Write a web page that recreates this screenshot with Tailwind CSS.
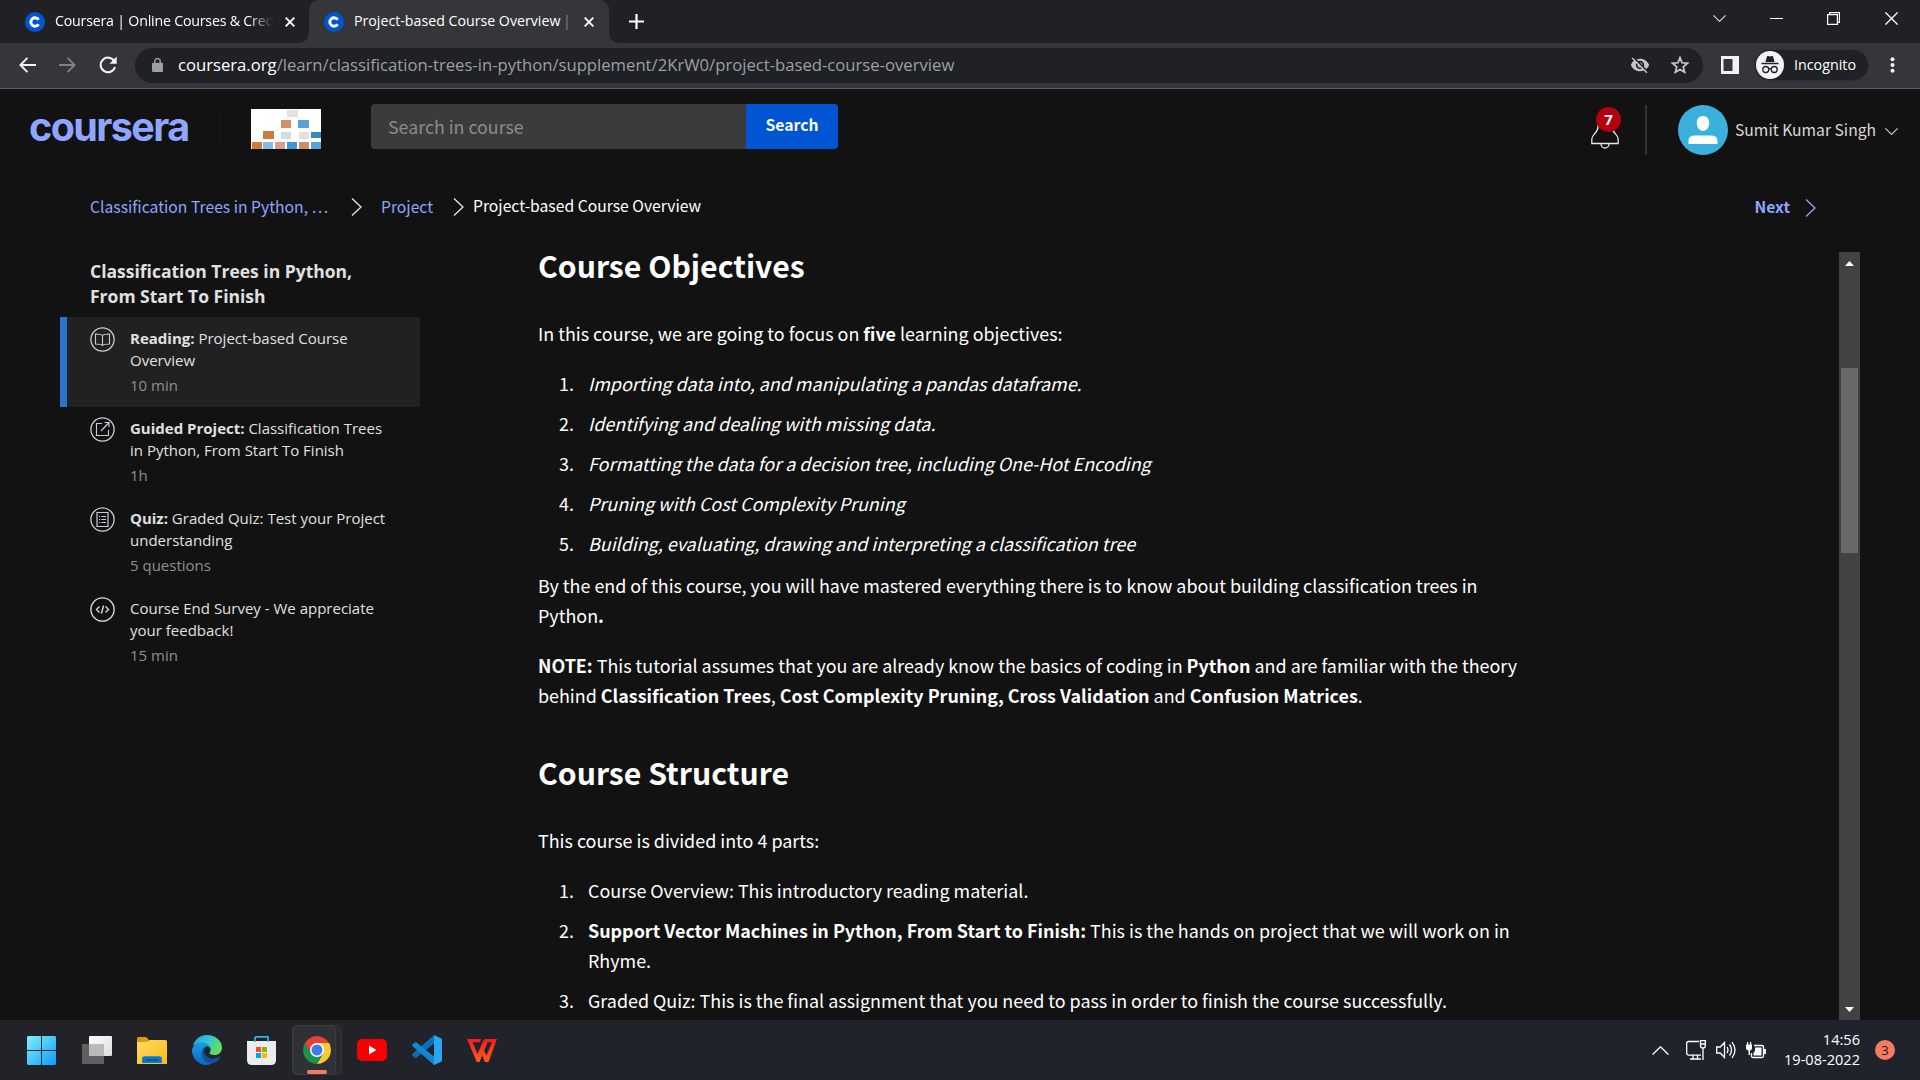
<!DOCTYPE html>
<html lang="en">
<head>
<meta charset="utf-8">
<title>Project-based Course Overview | Coursera</title>
<script src="https://cdn.jsdelivr.net/npm/@tailwindcss/browser@4"></script>
</head>
<body class="w-[1920px] h-[1080px] overflow-hidden bg-[#121212] text-white flex flex-col font-['Noto_Sans_CJK_SC',sans-serif]">

<!-- Tab strip -->
<div class="h-[43px] shrink-0 bg-[#202124] flex font-['Open_Sans',sans-serif] text-[14.2px]">
  <div class="w-[309px] flex items-center pl-[25px] pr-[13px]">
    <svg class="w-5 h-5 shrink-0" viewBox="0 0 20 20"><circle cx="10" cy="10" r="10" fill="#0056d2"/><path d="M13.6 7.8A4.2 4.2 0 1 0 13.6 12.2" fill="none" stroke="#fff" stroke-width="2.9"/></svg>
    <span class="ml-[10px] mb-[2px] w-[218px] whitespace-nowrap leading-5 tracking-[-0.2px] [mask-image:linear-gradient(to_right,#000_89%,transparent)]">Coursera | Online Courses &amp; Cred</span>
    <svg class="ml-3 w-[10px] h-[10px] shrink-0" viewBox="0 0 10 10"><path d="M.7.7l8.6 8.6M9.3.7L.7 9.3" stroke="#fff" stroke-width="1.9"/></svg>
  </div>
  <div class="relative w-[300px] bg-[#35363a] rounded-t-[10px] flex items-center pl-[15px]">
    <svg class="absolute -left-[10px] bottom-0 w-[10px] h-[10px]" viewBox="0 0 10 10"><path d="M10 0v10H0A10 10 0 0 0 10 0z" fill="#35363a"/></svg>
    <svg class="absolute -right-[10px] bottom-0 w-[10px] h-[10px]" viewBox="0 0 10 10"><path d="M0 0v10h10A10 10 0 0 1 0 0z" fill="#35363a"/></svg>
    <svg class="w-5 h-5 shrink-0" viewBox="0 0 20 20"><circle cx="10" cy="10" r="10" fill="#0056d2"/><path d="M13.6 7.8A4.2 4.2 0 1 0 13.6 12.2" fill="none" stroke="#fff" stroke-width="2.9"/></svg>
    <span class="ml-[10px] mb-[2px] w-[219px] whitespace-nowrap leading-5">Project-based Course Overview <span class="-ml-px text-[#7d8790]">|</span></span>
    <svg class="ml-[11px] w-[10px] h-[10px] shrink-0" viewBox="0 0 10 10"><path d="M.7.7l8.6 8.6M9.3.7L.7 9.3" stroke="#fff" stroke-width="1.9"/></svg>
  </div>
  <div class="flex items-center pl-5"><svg class="w-[15px] h-[15px]" viewBox="0 0 15 15"><path d="M7.5 0v15M0 7.5h15" stroke="#fff" stroke-width="2.2"/></svg></div>
  <div class="ml-auto mr-[22px] h-[37px] flex items-center">
    <svg class="w-[13px] h-[7px] mr-[44px]" viewBox="0 0 13 7"><path d="M.4.4l6.1 6 6.1-6" fill="none" stroke="#ddd" stroke-width="1.1"/></svg>
    <svg class="w-[13px] h-[13px] mr-[44px]" viewBox="0 0 13 13"><path d="M0 6.5h13" stroke="#fff"/></svg>
    <svg class="w-[13px] h-[13px] mr-[45px]" viewBox="0 0 13 13"><path d="M.6 2.6h9.8v9.8H.6zM2.6 2.6V.6h9.8v9.8h-2" fill="none" stroke="#fff" stroke-width="1.2"/></svg>
    <svg class="w-[13px] h-[13px]" viewBox="0 0 13 13"><path d="M.4.4l12.2 12.2M12.6.4L.4 12.6" stroke="#fff" stroke-width="1.3"/></svg>
  </div>
</div>

<!-- Toolbar -->
<div class="h-[46px] shrink-0 bg-[#35363a] border-b border-[#5c5d60] flex items-center pb-px font-['Open_Sans',sans-serif]">
  <svg class="ml-[19px] w-[17px] h-4" viewBox="0 0 17 16"><path d="M17 8H1.6M8.4.8L1.4 8l7 7.2" fill="none" stroke="#f1f3f4" stroke-width="1.9"/></svg>
  <svg class="ml-[23px] w-[17px] h-4" viewBox="0 0 17 16"><path d="M0 8h15.4M8.6.8l7 7.2-7 7.2" fill="none" stroke="#7f8185" stroke-width="1.9"/></svg>
  <svg class="ml-[23px] w-[18px] h-[18px]" viewBox="0 0 18 18"><path d="M15.3 5.2A7.3 7.3 0 1 0 16 11" fill="none" stroke="#f1f3f4" stroke-width="2"/><path d="M17.7.6v7.2h-7.2z" fill="#f1f3f4"/></svg>
  <div class="ml-[18px] w-[1568px] h-[35px] rounded-full bg-[#202124] flex items-center pl-[17px] pr-[12px]">
    <svg class="w-[11px] h-[14px]" viewBox="0 0 11 14"><rect y="4.7" width="11" height="9.3" rx="1.2" fill="#9aa0a6"/><path d="M2.7 5V3.4a2.8 2.8 0 0 1 5.6 0V5" fill="none" stroke="#9aa0a6" stroke-width="1.4"/></svg>
    <span class="ml-[15px] text-[16.67px] leading-6 text-[#9aa0a6] whitespace-nowrap"><span class="text-white">coursera.org</span>/learn/classification-trees-in-python/supplement/2KrW0/project-based-course-overview</span>
    <svg class="ml-auto w-5 h-5" viewBox="0 0 24 24" fill="#c4c7c9"><path d="M12 7c2.8 0 5 2.200 5 5 0 .650-.130 1.260-.360 1.830l2.920 2.920c1.510-1.260 2.700-2.890 3.430-4.750C21.270 7.610 17 4.500 12 4.500c-1.400 0-2.740.250-3.980.700l2.160 2.160C10.740 7.130 11.350 7 12 7zM2 4.270l2.740 2.740C3.080 8.300 1.780 10 1 12c1.730 4.390 6 7.500 11 7.500 1.550 0 3.030-.300 4.380-.840L19.730 22 21 20.730 3.270 3 2 4.270zM7.530 9.800l1.550 1.550A3 3 0 0 0 12 15c.220 0 .440-.030.650-.080l1.550 1.550C13.530 16.800 12.790 17 12 17c-2.760 0-5-2.240-5-5 0-.790.200-1.530.530-2.200zm4.310-.780l3.150 3.150.020-.160c0-1.660-1.340-3-3-3l-.170.010z"/></svg>
    <svg class="ml-[19px] w-[22px] h-[22px]" viewBox="0 0 24 24"><path d="M12 4l2.200 5.600 6 .5-4.600 3.900 1.400 5.900L12 16.800l-5 3.100 1.400-5.900-4.600-3.900 6-.5z" fill="none" stroke="#c4c7c9" stroke-width="1.9"/></svg>
  </div>
  <svg class="ml-[18px] w-[18px] h-[18px]" viewBox="0 0 18 18"><path fill="#f1f3f4" fill-rule="evenodd" d="M0 0h18v18H0zM2.500 3v12h9V3z"/></svg>
  <div class="ml-[15px] w-[115px] h-8 rounded-full bg-[#202124] border border-[#2f3034] flex items-center pl-px">
    <svg class="w-7 h-7" viewBox="0 0 28 28"><circle cx="14" cy="14" r="14" fill="#f1f3f4"/><path d="M9.500 11l1.300-5.300c.2-.7.700-.8 1.300-.6 1.200.5 2.600.5 3.800 0 .6-.2 1.100-.1 1.300.6L18.500 11zM5.500 11.800h17v1.400h-17z" fill="#202124"/><g fill="none" stroke="#202124" stroke-width="1.300"><circle cx="9.800" cy="18.500" r="3"/><circle cx="18.200" cy="18.500" r="3"/><path d="M12.800 18c.8-.6 1.600-.6 2.400 0"/></g></svg>
    <span class="ml-[10px] text-[14.3px] leading-5">Incognito</span>
  </div>
  <svg class="ml-[21px] w-[5px] h-4" viewBox="0 0 5 16" fill="#f1f3f4"><circle cx="2.500" cy="2.200" r="2"/><circle cx="2.500" cy="8" r="2"/><circle cx="2.500" cy="13.800" r="2"/></svg>
</div>

<!-- Page -->
<div class="h-[931px] shrink-0 flex flex-col overflow-hidden">
  <header class="h-[82px] shrink-0 flex items-center">
    <div class="ml-[29px] w-[161px] -mt-[6px] font-[Inter,sans-serif] font-bold text-[39.5px] leading-[50px] tracking-[-1.6px] text-[#8ea6ff]">coursera</div>
    <div class="ml-[30px] w-px h-8 bg-[#191919]"></div>
    <svg class="ml-[30px] mt-[-2px] w-[70px] h-10" viewBox="0 0 70 40"><path fill="#fff" d="M0 0h70v40H0z"/>
      <path d="M41 7L36 12M42 7l10 5M34 19l-15 5M35 19v5M52 19v5M54 19l10 5M17 30L6 34M18 30v4M35 30l-6 4M35 30l6 4M53 30v4" stroke="#eee" stroke-width=".6"/>
      <path fill="#e9dedd" d="M36 1h11v7H36zM48 23h10v7H48z"/><path fill="#d39066" d="M30 11h10v8H30z"/><path fill="#57a2d8" d="M47 11h11v8H47z"/><path fill="#cd7c40" d="M12 22h11v8H12zM1 33h10v7H1z"/><path fill="#cbdfeb" d="M30 23h10v7H30z"/><path fill="#3787c4" d="M60 23h10v6H60z"/><path fill="#8bbadd" d="M12 33h10v7H12z"/><path fill="#d6a184" d="M24 33h10v7H24z"/><path fill="#4296d1" d="M36 33h10v7H36z"/><path fill="#cb8f68" d="M48 33h10v7H48z"/><path fill="#5ca3d5" d="M60 33h10v7H60z"/></svg>
    <div class="ml-[50px] mt-[-7px] w-[467px] h-[45px] rounded-[4px] overflow-hidden bg-[#3b3b3b] flex items-center">
      <span class="w-[375px] pl-[17px] pb-[2px] text-[17.8px] leading-6 text-[#8b8b8b]">Search in course</span>
      <span class="w-[92px] h-full bg-[#0056d2] flex items-center justify-center text-[15.7px] leading-6 font-bold pb-[3px]">Search</span>
    </div>
    <div class="ml-auto relative w-[28px] h-[34px] mt-1">
      <svg class="absolute left-0 top-0 w-[28px] h-[34px]" viewBox="0 0 28 34" fill="none" stroke="#e6e6e6" stroke-width="1.300"><path d="M7 8v4c0 6-6.200 7.500-6.200 12v4.500h26.400V24c0-4.500-6.200-6-6.200-12V8M10 29a4 4 0 0 0 8 0"/></svg>
      <span class="absolute left-[5px] -top-[8px] w-[25px] h-[25px] rounded-full bg-[#b3000f] text-[15px] leading-[24px] font-bold text-center font-['Open_Sans',sans-serif]">7</span>
    </div>
    <div class="ml-[26px] w-[2px] h-[50px] bg-[#333]"></div>
    <svg class="ml-[31px] w-[50px] h-[50px]" viewBox="0 0 50 50"><circle cx="25" cy="25" r="25" fill="#3bb0dd"/><path d="M25 11c4 0 6.200 2.800 6.200 7S28.500 26 25 26s-6.200-3.800-6.200-8 2.200-7 6.200-7zM10.500 39v-3c0-4 2.500-5.500 7-5.500h15c4.500 0 7 1.500 7 5.500v3z" fill="#fff"/></svg>
    <span class="ml-[7px] w-[142px] text-[15.7px] leading-6 text-[#d9d9d9] whitespace-nowrap">Sumit Kumar Singh</span>
    <svg class="ml-2 mr-[22px] mt-[2px] w-[13px] h-[7px]" viewBox="0 0 13 7"><path d="M.4.4l6.100 6 6.100-6" fill="none" stroke="#d0d0d0" stroke-width="1.100"/></svg>
  </header>

  <nav class="h-[74px] shrink-0 flex items-center pl-[90px] text-[15.7px] leading-6 text-[#8ea6ff]">
    <span class="mb-[2px] w-[239px] whitespace-nowrap">Classification Trees in Python, …</span>
    <svg class="ml-[22px] mb-[2px] w-[11px] h-[18px]" viewBox="0 0 11 18"><path d="M1 .5l9 8.500-9 8.500" fill="none" stroke="#e8e8e8" stroke-width="1.300"/></svg>
    <span class="ml-[19px] mb-[2px] w-[53px]">Project</span>
    <svg class="ml-[19px] mb-[2px] w-[11px] h-[18px]" viewBox="0 0 11 18"><path d="M1 .5l9 8.500-9 8.500" fill="none" stroke="#e8e8e8" stroke-width="1.300"/></svg>
    <span class="ml-[9px] mb-[4px] text-white">Project-based Course Overview</span>
    <span class="ml-auto mb-[2px] font-bold">Next</span>
    <svg class="ml-[15px] mr-[104px] w-[11px] h-[18px]" viewBox="0 0 11 18"><path d="M1 .5l9 8.500-9 8.500" fill="none" stroke="#8ea6ff" stroke-width="1.300"/></svg>
  </nav>

  <div class="flex h-[775px]">
    <!-- Course items -->
    <aside class="ml-[60px] w-[360px] pt-[14px] font-['Open_Sans',sans-serif] text-[15px] leading-[22px] text-[#e0e0e0]">
      <h2 class="pl-[30px] h-[58px] text-[17.5px] leading-[25px] font-bold">Classification Trees in Python,<br>From Start To Finish</h2>
      <div class="h-[90px] bg-[#212121] border-l-[7px] border-[#2a73cf] flex pl-[23px] pt-[10px]">
        <svg class="w-[25px] h-[25px] mr-[15px]" viewBox="0 0 25 25" fill="none" stroke="#c9ced6" stroke-width="1.300"><circle cx="12.500" cy="12.500" r="11.600"/><path d="M12.500 8.500c-1-1.200-3-1.500-7-1.500v10c4 0 6 .3 7 1.500 1-1.200 3-1.500 7-1.500V7c-4 0-6 .3-7 1.500zv10" stroke-width="1.100"/></svg>
        <div><p><b>Reading:</b> Project-based Course<br>Overview</p><p class="pt-[3px] text-[#8f8f8f]">10 min</p></div>
      </div>
      <div class="h-[90px] flex pl-[30px] pt-[10px]">
        <svg class="w-[25px] h-[25px] mr-[15px]" viewBox="0 0 25 25" fill="none" stroke="#c9ced6" stroke-width="1.300"><circle cx="12.500" cy="12.500" r="11.600"/><path d="M12 6.500H6.500v12h12V13M11 14l8-8.500M14.500 5.500H19v4.500" stroke-width="1.100"/></svg>
        <div><p><b>Guided Project:</b> Classification Trees<br>in Python, From Start To Finish</p><p class="pt-[3px] text-[#8f8f8f]">1h</p></div>
      </div>
      <div class="h-[90px] flex pl-[30px] pt-[10px]">
        <svg class="w-[25px] h-[25px] mr-[15px]" viewBox="0 0 25 25" fill="none" stroke="#c9ced6" stroke-width="1.300"><circle cx="12.500" cy="12.500" r="11.600"/><path d="M7 5.500h11v14H7zM9 9.500h1.200M11.500 9.500H16M9 12.500h1.200M11.500 12.500H16M9 15.500h1.200M11.500 15.500H16" stroke-width="1.200"/></svg>
        <div><p><b>Quiz:</b> Graded Quiz: Test your Project<br>understanding</p><p class="pt-[3px] text-[#8f8f8f]">5 questions</p></div>
      </div>
      <div class="h-[90px] flex pl-[30px] pt-[10px]">
        <svg class="w-[25px] h-[25px] mr-[15px]" viewBox="0 0 25 25" fill="none" stroke="#d5dae2" stroke-width="1.400"><circle cx="12.500" cy="12.500" r="11.600"/><path d="M9.500 9.500l-3 3 3 3M15.500 9.500l3 3-3 3M13.600 8.500l-2.200 8"/></svg>
        <div><p>Course End Survey - We appreciate<br>your feedback!</p><p class="pt-[3px] text-[#8f8f8f]">15 min</p></div>
      </div>
    </aside>

    <!-- Reading -->
    <main class="ml-[118px] w-[1010px] text-[17.92px] leading-[30px] whitespace-nowrap">
      <h1 class="text-[30.2px] leading-10 font-bold">Course Objectives</h1>
      <p class="mt-[33px]">In this course, we are going to focus on <b>five</b> learning objectives:</p>
      <ol class="mt-5 pl-[50px] flex flex-col gap-[10px]">
        <li class="flex"><span class="-ml-[29px] w-[29px]">1.</span><i>Importing data into, and manipulating a pandas dataframe.</i></li>
        <li class="flex"><span class="-ml-[29px] w-[29px]">2.</span><i>Identifying and dealing with missing data.</i></li>
        <li class="flex"><span class="-ml-[29px] w-[29px]">3.</span><i>Formatting the data for a decision tree, including One-Hot Encoding</i></li>
        <li class="flex"><span class="-ml-[29px] w-[29px]">4.</span><i>Pruning with Cost Complexity Pruning</i></li>
        <li class="flex"><span class="-ml-[29px] w-[29px]">5.</span><i>Building, evaluating, drawing and interpreting a classification tree</i></li>
      </ol>
      <p class="mt-3">By the end of this course, you will have mastered everything there is to know about building classification trees in<br>Python<b>.</b></p>
      <p class="mt-5"><b>NOTE:</b> This tutorial assumes that you are already know the basics of coding in <b>Python</b> and are familiar with the theory<br>behind <b>Classification Trees</b>, <b>Cost Complexity Pruning, Cross Validation</b> and <b>Confusion Matrices</b>.</p>
      <h1 class="mt-[42px] text-[30.2px] leading-10 font-bold">Course Structure</h1>
      <p class="mt-[33px]">This course is divided into 4 parts:</p>
      <ol class="mt-5 pl-[50px] flex flex-col gap-[10px]">
        <li class="flex"><span class="-ml-[29px] w-[29px]">1.</span><span>Course Overview: This introductory reading material.</span></li>
        <li class="flex"><span class="-ml-[29px] w-[29px]">2.</span><span><b>Support Vector Machines in Python, From Start to Finish:</b> This is the hands on project that we will work on in<br>Rhyme.</span></li>
        <li class="flex"><span class="-ml-[29px] w-[29px]">3.</span><span>Graded Quiz: This is the final assignment that you need to pass in order to finish the course successfully.</span></li>
      </ol>
    </main>

    <!-- Scrollbar -->
    <div class="ml-auto mr-[60px] mt-[7px] w-[21px] h-[768px] bg-[#424242] flex flex-col items-center">
      <svg class="mt-[9px] w-[9px] h-[5px]" viewBox="0 0 9 5"><path d="M4.500 0L9 5H0z" fill="#fff"/></svg>
      <div class="mt-[102px] w-[17px] h-[185px] bg-[#686868]"></div>
      <svg class="mt-auto mb-[8px] w-[9px] h-[5px]" viewBox="0 0 9 5"><path d="M0 0h9L4.500 5z" fill="#fff"/></svg>
    </div>
  </div>
</div>

<!-- Taskbar -->
<div class="h-[60px] shrink-0 bg-linear-to-r from-[#222328] via-[#20232c] to-[#1f232b] flex items-center pl-[14px] font-['Open_Sans',sans-serif]">
  <div class="w-[55px] flex justify-center"><svg class="w-[29px] h-[29px]" viewBox="0 0 29 29"><defs><linearGradient id="wn" x1="0" y1="0" x2="1" y2="1" gradientUnits="objectBoundingBox"><stop stop-color="#7df0fc"/><stop offset="1" stop-color="#0f9bfb"/></linearGradient></defs><path fill="url(#wn)" d="M1 0h13v14H0V1zM15 0h13l1 1v13H15zM0 15h14v14H1l-1-1zM15 15h14v13l-1 1H15z"/></svg></div>
  <div class="w-[55px] flex justify-center"><svg class="w-[30px] h-[28px]" viewBox="0 0 30 28"><defs><linearGradient id="tv" x1="0" y1="0" x2="1" y2="1"><stop stop-color="#fff"/><stop offset="1" stop-color="#dcdcdc"/></linearGradient></defs><rect y="8" width="22" height="20" rx="1" fill="#606060"/><rect x="7" width="23" height="20" rx="1" fill="url(#tv)"/><path d="M7 8h15v12H7z" fill="#b9b9b9"/></svg></div>
  <div class="w-[55px] flex justify-center"><svg class="w-[30px] h-[27px]" viewBox="0 0 30 27"><defs><linearGradient id="fe" x1="0" y1="0" x2="1" y2="1"><stop stop-color="#ffdc65"/><stop offset="1" stop-color="#fbb918"/></linearGradient></defs><path d="M0 1.500Q0 0 1.500 0H9l3.500 3.500V9H0z" fill="#dd9a0a"/><path d="M0 5h10.500l2.500-2h15.500q1.500 0 1.500 1.500V27H0z" fill="url(#fe)"/><path d="M5 26v-4q0-2.800 2.800-2.800h14.400q2.800 0 2.800 2.800v4z" fill="#0b79cf"/><path d="M8.500 23h13" stroke="#064a86" stroke-width="1.200"/></svg></div>
  <div class="w-[55px] flex justify-center"><svg class="w-[30px] h-[30px]" viewBox="0 0 30 30"><defs><linearGradient id="e1" x1="0" y1="0" x2="1" y2=".5"><stop stop-color="#1f9de0"/><stop offset=".5" stop-color="#35c3d8"/><stop offset="1" stop-color="#63e05a"/></linearGradient><linearGradient id="e2" x1="0" y1="0" x2="0" y2="1"><stop stop-color="#1b9de2"/><stop offset="1" stop-color="#0c66c4"/></linearGradient></defs><path d="M1 11C2.500 4.500 8 0 15 0c8.500 0 15 6 15 12.500 0 5-3.500 7.500-7.500 7.500-3.300 0-5-1-5-2 0-.8 1.200-1.500 1.200-3.500C18.700 11 15 8 10.500 8 6 8 2.500 9.500 1 11z" fill="url(#e1)"/><path d="M0 15C.5 10.500 5 7.500 10 7.500c4.500 0 8.700 3 8.700 6.500-1-2-3-2.500-4.200-2.500-3 1-5 4-4 8 1 5 6 8 11 7.500-2 2-5 3-7 3C6 30 0 23 0 15z" fill="url(#e2)"/><path d="M14.500 11.500c-2.500 2-3 5.500-1 8.500 3 4 9 4.500 14 1.500.8-.3 1.200.2.800.9C26 26.500 22 28.500 18.500 28.300 13 27.500 9.500 23 9.700 18.500c.2-3.500 2-6 4.800-7z" fill="#124f9e"/></svg></div>
  <div class="w-[55px] flex justify-center"><svg class="w-[29px] h-[29px]" viewBox="0 0 29 29"><path d="M0 5h29v19q0 5-5 5H5q-5 0-5-5z" fill="#ececec"/><path d="M8 .9h13V5M8 .9V6M21 5v1" fill="none" stroke="#2cb5ee" stroke-width="1.700"/><path d="M9 11h5v5H9z" fill="#f25022"/><path d="M15 11h5v5h-5z" fill="#7fba00"/><path d="M9 17h5v5H9z" fill="#00a4ef"/><path d="M15 17h5v5h-5z" fill="#ffb900"/></svg></div>
  <div class="w-[55px] flex justify-center">
    <div class="relative w-[50px] h-[50px] flex">
      <div class="absolute left-0 top-0 w-[50px] h-[50px] rounded-[5px] bg-[#2a2b30] border border-[#34353a]"></div>
      <div class="relative w-[44px] h-[50px] rounded-[5px] bg-[#303137] border border-[#3b3c42]"></div>
      <svg class="absolute left-[11px] top-[11px] w-7 h-7" viewBox="0 0 28 28"><path d="M14 7h12.100A14 14 0 0 1 14 28l6-10.500z" fill="#fcc934"/><path d="M14 28A14 14 0 0 1 1.900 7l6 10.500 12.100 0z" fill="#1e9349"/><path d="M1.900 7A14 14 0 0 1 26.100 7H14L8 17.500z" fill="#df4437"/><circle cx="14" cy="14" r="7" fill="#fff"/><circle cx="14" cy="14" r="5.500" fill="#3c7ded"/></svg>
      <div class="absolute left-[15px] bottom-[1px] w-5 h-1 rounded-full bg-[#f47b62]"></div>
    </div>
  </div>
  <div class="w-[55px] flex justify-center"><svg class="w-[30px] h-[22px]" viewBox="0 0 30 22"><rect width="30" height="22" rx="5" fill="#f60002"/><path d="M12 6.500l7.500 4.500-7.500 4.500z" fill="#fff"/></svg></div>
  <div class="w-[55px] flex justify-center"><svg class="w-[30px] h-[30px]" viewBox="0 0 30 30"><path d="M22 0v8.500L4.500 22.500q-1 .7-1.800 0L.6 20.700q-1-1 0-2z" fill="#0a6fb8"/><path d="M22 30v-8.500L4.500 7.500q-1-.7-1.800 0L.6 9.300q-1 1 0 2z" fill="#1287d0"/><path d="M22 0l7 3.200q1 .5 1 1.700v20.200q0 1.200-1 1.700L22 30z" fill="#2aa5f0"/></svg></div>
  <div class="w-[55px] flex justify-center"><svg class="w-[30px] h-[23px]" viewBox="0 0 30 23"><defs><linearGradient id="wp" x1="0" y1="0" x2="0" y2="1"><stop stop-color="#fb1a1a"/><stop offset="1" stop-color="#fb5b20"/></linearGradient></defs><path d="M0 0h14l-1 3.200H5.500L10.500 15 16 2q.8-2 3-2h3l-9.500 23H9.800z" fill="url(#wp)"/><path d="M22 0h8l-8.500 23H18l-3-7 2-4.500 2.500 5L25 3.200h-4.500z" fill="url(#wp)"/></svg></div>

  <div class="ml-auto mr-[25px] flex items-center">
    <svg class="w-[17px] h-[9px] mr-[17px]" viewBox="0 0 17 9"><path d="M.6 8.500L8.500.8l7.900 7.700" fill="none" stroke="#fff" stroke-width="1.300"/></svg>
    <svg class="w-[20px] h-[20px] mr-[10px]" viewBox="0 0 20 20" fill="none" stroke="#fff" stroke-width="1.300"><path d="M13 1.500H2.500q-1.800 0-1.800 1.800v10q0 1.800 1.800 1.800h12.500M7 15v3.500M11.500 15v3.500M4 19h11M14.500.7h4.800v5q0 2.300-2.400 2.300t-2.400-2.300zM14.500 4h4.800M17 8v12"/></svg>
    <svg class="w-[20px] h-[18px] mr-[10px]" viewBox="0 0 20 18" fill="none" stroke="#fff" stroke-width="1.300"><path d="M.7 6h3.500L8.500 1.500v15L4.200 12H.7zM11 6q2 3 0 6M13.500 3.500q4 5.500 0 11M16 1.200q6 7.800 0 15.600"/></svg>
    <svg class="w-[20px] h-[17px] mr-[14px]" viewBox="0 0 20 17"><path d="M8 3.500h8q1.500 0 1.500 1.500v9q0 1.500-1.500 1.500H7q-1.500 0-1.500-1.500v-3" fill="none" stroke="#fff" stroke-width="1.300"/><path d="M9 5.500h6.500v8h-8V11q2-1.500 1.500-5.500zM18 7h2v5h-2zM0 2.500h6V6q0 2-2 2.500V13H2.500V8.500Q0 8 0 6zM1 0h1.200v3H1zM4 0h1.200v3H4z" fill="#fff"/></svg>
    <div class="w-[80px] mb-[2px] text-right text-[14.57px] leading-5"><div>14:56</div><div>19-08-2022</div></div>
    <div class="ml-[15px] w-5 h-5 rounded-full bg-[#f47b62] text-[#1d1d1d] text-[13px] leading-5 text-center">3</div>
  </div>
</div>
</body>
</html>
